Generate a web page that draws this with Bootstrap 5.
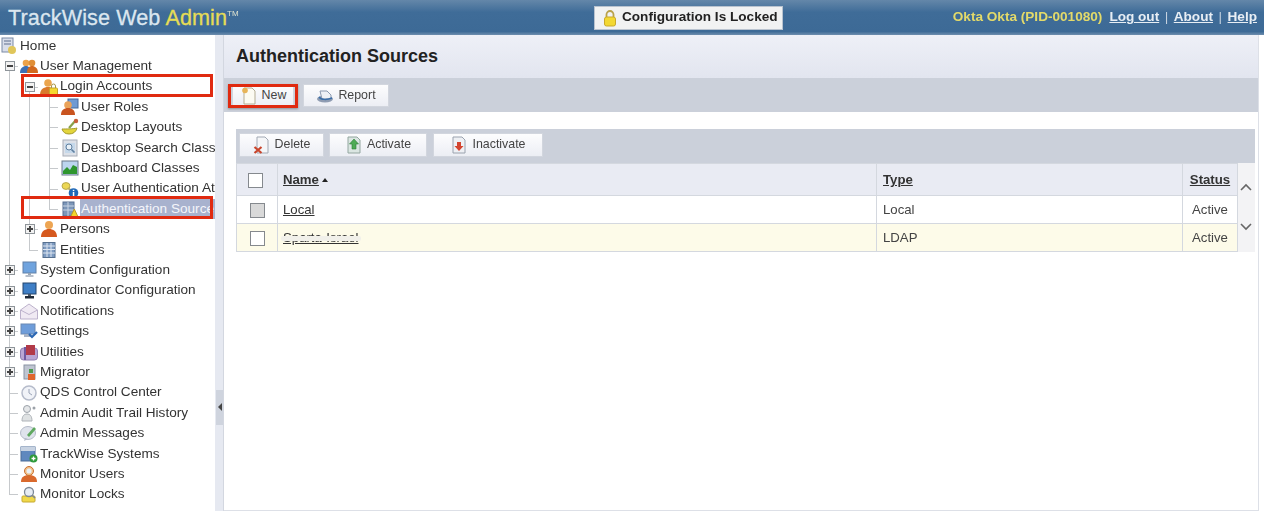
<!DOCTYPE html>
<html lang="en"><head><meta charset="utf-8"><title>TrackWise Web Admin</title>
<link href="https://cdn.jsdelivr.net/npm/bootstrap@5.3.0/dist/css/bootstrap.min.css" rel="stylesheet">
<style>
html,body{height:511px;overflow:hidden}
body{font-family:"Liberation Sans",Arial,sans-serif;background:#fff;color:#333}
.shell{width:1264px;height:511px;filter:blur(.5px);position:relative;overflow:hidden}
.topbar{height:35px;background:linear-gradient(#6487a9,#3f6c98 35%,#3d6a96 90%,#6e8eae);padding:0 7px 0 8px}
.brand{font-size:21.6px;line-height:35px;color:#dbe6ef;letter-spacing:.1px;white-space:nowrap;width:586px;-webkit-text-stroke:.3px #dbe6ef}
.brand b{font-weight:400;color:#e6dc55;-webkit-text-stroke:.3px #e6dc55;margin-left:0}
.brand sup{font-size:8px;color:#dfe3d0;top:-9px;-webkit-text-stroke:0}
.lockbox{width:189px;height:24px;background:#f1f2f2;border:1px solid #b9c3cf;font-size:13.6px;font-weight:700;color:#222;gap:3px;padding-left:6px}
.usr{font-size:13.6px;font-weight:700;color:#e3da6a;white-space:nowrap}
.usr a{color:#e8eef4;margin-left:7px}
.usr i{font-style:normal;color:#c5d2df;font-weight:400;margin-left:5.5px}
.usr i + a{margin-left:5.5px}
.bodyrow{height:476px}
.side{width:215px;overflow:hidden;flex:none;font-size:13.6px;color:#333;padding-top:.7px}
.trow{height:20.4px;white-space:nowrap}
.tg,.tc{width:20px;height:100%;flex:none;position:relative}
.tg.on::before,.tc::before{content:"";position:absolute;left:9px;top:0;bottom:0;border-left:1px solid #c6c9cc}
.tc.end::before{bottom:50%}
.tc.top::before{top:50%}
.tc::after{content:"";position:absolute;left:9px;right:2px;top:50%;border-top:1px solid #c6c9cc}
.tx{position:absolute;z-index:1;left:5px;top:50%;margin-top:-5px;width:10px;height:10px;background:#f2f2f2;border:1px solid #8e9499}
.tx::before{content:"";position:absolute;left:1px;right:1px;top:3px;border-top:2px solid #444}
.tx.plus::after{content:"";position:absolute;top:1px;bottom:1px;left:3px;border-left:2px solid #444}
.ic{width:18px;height:18px;flex:none;margin-right:2px}
.lv2 .ic{margin-left:1px}
.sel{background:#a8b2ce;color:#f4f5fa;flex:1;margin-left:-1px;padding-left:1px;line-height:20.4px}
.split{width:9px;flex:none;background:#e6e9f1;position:relative;border-right:1px solid #d3d7e0}
.grip{position:absolute;left:1px;right:0;top:355px;height:35px;background:#cfd4de}
.grip::after{content:"";position:absolute;left:2px;top:13px;border:4px solid transparent;border-right:4px solid #444;border-left:0}
.mainp{flex:1;min-width:0;position:relative;border-right:1px solid #dde0e7;margin-right:5px;border-bottom:1px solid #dde0e7}
.ttl{height:43px;background:linear-gradient(#eef0f7,#e2e5ef);padding-left:12px;font-size:18px;font-weight:700;color:#222}
.tbar1{height:34px;background:#cbd0da;padding:6px 0 0 8px;gap:9px}
.tbtn{height:23px;background:linear-gradient(#fdfdfe,#eceef4);border:1px solid #d2d6de;border-radius:0;font-size:12.4px;color:#444;padding:0;gap:4px;display:flex;align-items:center;justify-content:center}
.tbar2 .tbtn span{margin-top:-1px}
.w-new{width:62px}.w-rep{width:86px}.w-del{width:85px;height:24px}.w-act{width:98px;height:24px}.w-ina{width:110px;height:24px}
.gridw{margin:17px 0 0 12px;width:1019px}
.tbar2{height:34px;background:#cbd0da;padding:4px 0 0 3px;gap:5px}
.w-act{margin-right:1px}
.gridt{width:1001px;flex:none}
.gridt.table{margin:0;table-layout:fixed;--bs-table-bg:transparent;border-color:#d4d8df;font-size:13.2px;color:#444}
.gridt th,.gridt td{border:1px solid #d4d8df;padding:0 5px;vertical-align:middle;line-height:1}
.gridt thead tr{height:32px;background:#e9ebf3}
.gridt th{font-weight:700;color:#333;font-size:13.2px}
.gridt a{color:#333}
.gridt th.c3,.gridt td.c3{padding-left:6px}
.r1{height:28px;background:#fff}.r2{height:28px;background:#fdfbe9}
.c1{width:41px;padding:0!important;text-align:center}.c2{width:599px}.c3{width:306px}.c4{width:55px;text-align:center}
.cbx{display:block;width:15px;height:15px;margin:1px auto 0;border:1px solid #85898e;background:#fff}
th .cbx{margin-left:11px}
.cbx.dis{background:#d9d9d9}
.sortm{display:inline-block;border:3.5px solid transparent;border-bottom:4px solid #222;border-top:0;margin:0 0 2px 3px}
.mask{position:absolute;left:3px;top:12px;width:80px;height:5px;background:#f1f0ea;border-radius:2px}
.cellrel{position:relative}
.scr{width:18px;background:#f3f3f5;gap:20px}
.scr svg{display:block}
.redb{position:absolute;border:3px solid #e02a10;z-index:5;pointer-events:none}
.rb1{left:21px;top:74px;width:192px;height:23px}
.rb2{left:21px;top:196px;width:192px;height:23px}
.rb3{left:228px;top:84px;width:70px;height:24px;box-shadow:0 1px 2px rgba(0,0,0,.3)}
</style></head><body>
<svg width="0" height="0" class="d-block position-absolute">
<defs>
<symbol id="s-lock" viewBox="0 0 18 18"><path d="M5.500 9V5.500a3.500 3.500 0 0 1 7 0V9" fill="none" stroke="#b9a24a" stroke-width="1.800"/><rect x="3.500" y="8" width="11" height="9" rx="2" fill="#f3d832" stroke="#c9a92a"/></symbol>
<symbol id="s-home" viewBox="0 0 18 18"><rect x="2" y="1" width="11" height="14" fill="#d9deea" stroke="#7a8aa5"/><path d="M4 4h7M4 7h7" stroke="#5f6f8d"/><circle cx="12" cy="13" r="4" fill="#e0c65a"/></symbol>
<symbol id="s-users" viewBox="0 0 18 18"><circle cx="6" cy="6" r="3.300" fill="#eda24a"/><circle cx="12" cy="6" r="3.300" fill="#e08e36"/><path d="M0 16c0-5 3-7 6-7s5 2 5 7z" fill="#3d6fb4"/><path d="M7 16c0-5 2-7 5-7s6 2 6 7z" fill="#d2691e"/></symbol>
<symbol id="s-login" viewBox="0 0 18 18"><circle cx="8" cy="5" r="3.800" fill="#eba54e"/><path d="M0 17c0-6 4-8 8-8s6 2 6 8z" fill="#d9792b"/><rect x="9.500" y="10" width="8" height="7" rx="1" fill="#f6d92f" stroke="#c5a52a"/><path d="M11.500 10V8a2 2 0 0 1 4 0v2" fill="none" stroke="#a89447"/></symbol>
<symbol id="s-role" viewBox="0 0 18 18"><rect x="7" y="1" width="10" height="9" fill="#6f9ad3" stroke="#466a9c"/><circle cx="7" cy="7" r="3.800" fill="#eaa35a"/><path d="M0 17c0-5 3-7 7-7s7 2 7 7z" fill="#c9541f"/></symbol>
<symbol id="s-layout" viewBox="0 0 18 18"><path d="M1 11c3 0 12 0 15-1-1 4-4 6-8 6s-6-2-7-5z" fill="#e3d53c" stroke="#a59a2e"/><path d="M8 10l7-8" stroke="#8aa14a" stroke-width="2.200"/><circle cx="15" cy="3" r="2.200" fill="#c9603a"/></symbol>
<symbol id="s-search" viewBox="0 0 18 18"><rect x="2" y="1" width="14" height="16" fill="#dde1e8" stroke="#a9aeb8"/><rect x="4" y="4" width="10" height="10" fill="#c5d8ea"/><circle cx="8" cy="8" r="3" fill="#e8f0f7" stroke="#5f7f9f"/><path d="M10.500 10.500l3 3" stroke="#5f7f9f" stroke-width="1.600"/></symbol>
<symbol id="s-dash" viewBox="0 0 18 18"><rect x="1" y="2" width="16" height="14" fill="#bcd5ef" stroke="#6d7a8a"/><path d="M2 12l4-4 3 3 3-5 4 2v7H2z" fill="#2e962e"/></symbol>
<symbol id="s-uauth" viewBox="0 0 18 18"><ellipse cx="5" cy="6" rx="4" ry="3.400" fill="#ecd754" stroke="#b8a84a"/><path d="M7 8l5 4" stroke="#bcae62" stroke-width="2"/><circle cx="12.500" cy="13" r="4.800" fill="#1f68b8"/><rect x="11.800" y="12" width="1.500" height="4" fill="#fff"/><rect x="11.800" y="9.800" width="1.500" height="1.300" fill="#fff"/></symbol>
<symbol id="s-asrc" viewBox="0 0 18 18"><rect x="2" y="2" width="11" height="14" fill="#7d97b9" stroke="#566f91"/><path d="M2 6h11M2 10h11M7 2v14" stroke="#cbd5e4"/><path d="M9.500 17l3.800-8 3.800 8z" fill="#f4d62a" stroke="#b89c26"/></symbol>
<symbol id="s-person" viewBox="0 0 18 18"><circle cx="9" cy="5" r="4" fill="#eda553"/><path d="M1 17c0-6 4-8 8-8s8 2 8 8z" fill="#d6591e"/></symbol>
<symbol id="s-ent" viewBox="0 0 18 18"><rect x="3" y="1.500" width="12" height="15" fill="#7f9cc2" stroke="#56708f"/><path d="M3 5h12M3 8.500h12M3 12h12M7 2v14M11 2v14" stroke="#dde5f0"/></symbol>
<symbol id="s-mon" viewBox="0 0 18 18"><rect x="3" y="1" width="13" height="11" fill="#6fa3de" stroke="#6080a8"/><rect x="8" y="12" width="3" height="2" fill="#9aa6b5"/><rect x="5.500" y="14" width="8" height="2" fill="#b7bfca"/></symbol>
<symbol id="s-mon2" viewBox="0 0 18 18"><rect x="3" y="1" width="13" height="11" fill="#3f7fc6" stroke="#24476f"/><rect x="8" y="12" width="3" height="2" fill="#4b5563"/><rect x="5" y="14" width="9" height="2.500" fill="#1f2937"/></symbol>
<symbol id="s-mail" viewBox="0 0 18 18"><path d="M.5 8L9 2l8.500 6v9H.5z" fill="#f0eaf3" stroke="#bdb2cc"/><path d="M.5 8L9 12.500 17.500 8" fill="none" stroke="#bdb2cc"/></symbol>
<symbol id="s-set" viewBox="0 0 18 18"><rect x="1" y="2" width="14" height="10" fill="#6e9dda" stroke="#6a89b4"/><rect x="4" y="12" width="7" height="3" fill="#a7b3c6"/><path d="M9 12l3 3 5-5" fill="none" stroke="#2b67b3" stroke-width="2.200"/></symbol>
<symbol id="s-util" viewBox="0 0 18 18"><rect x="0.500" y="5" width="17" height="12" rx="3" fill="#b9a5d4" stroke="#8f7eb0"/><rect x="6" y="2" width="9" height="10" fill="#b23a48"/><rect x="4" y="4" width="2" height="13" fill="#7058a0"/></symbol>
<symbol id="s-mig" viewBox="0 0 18 18"><rect x="4" y="2" width="11" height="14" fill="#bfc5d1" stroke="#8a93a3"/><rect x="9" y="6" width="4" height="4" fill="#4f9a4f"/><path d="M8 11h7v6H8z" fill="#e0662e"/></symbol>
<symbol id="s-clock" viewBox="0 0 18 18"><circle cx="9" cy="9" r="7" fill="#f1f3f8" stroke="#b6bccb" stroke-width="1.500"/><path d="M9 5v4l3 2" stroke="#9aa3b6" fill="none"/></symbol>
<symbol id="s-audit" viewBox="0 0 18 18"><circle cx="7" cy="5" r="3.500" fill="#e5e7e9" stroke="#9ba1a8"/><path d="M2 17c0-5 2-7 5-7s5 2 5 7z" fill="#dfe2e3" stroke="#aeb3b8"/><circle cx="14" cy="4" r="1.500" fill="#9ba1a8"/></symbol>
<symbol id="s-msg" viewBox="0 0 18 18"><ellipse cx="8" cy="9" rx="7.500" ry="6.500" fill="#dfe3ec" stroke="#b4bac8"/><path d="M7 11l7-8 2 2-7 8z" fill="#5fa85f"/><path d="M5 14l-1 3 4-2z" fill="#b4bac8"/></symbol>
<symbol id="s-sys" viewBox="0 0 18 18"><rect x="1" y="2" width="14" height="14" fill="#5f88be" stroke="#4d6d97"/><rect x="1" y="2" width="14" height="4" fill="#c8d3e2"/><circle cx="13.500" cy="13.500" r="4" fill="#2f9a3a"/><path d="M11.500 13.500h4M13.500 11.500v4" stroke="#fff" stroke-width="1.300"/></symbol>
<symbol id="s-mu" viewBox="0 0 18 18"><path d="M1 17c0-5 3-7 8-7s8 2 8 7z" fill="#d9692d"/><circle cx="9" cy="6" r="4.500" fill="#f2c48d" stroke="#c96f30"/><circle cx="9" cy="6" r="2.500" fill="#e8f0f8"/></symbol>
<symbol id="s-ml" viewBox="0 0 18 18"><rect x="2" y="11" width="13" height="6" rx="1" fill="#f0d84a" stroke="#c6aa30"/><circle cx="9" cy="7" r="4.500" fill="#e7edf4" stroke="#7d8896" stroke-width="1.300"/><path d="M12 10l3 3" stroke="#7d8896" stroke-width="1.500"/></symbol>
<symbol id="s-new" viewBox="0 0 18 18"><path d="M4 1h8l3 3v13H4z" fill="#fcfbf2" stroke="#b5ad94"/><circle cx="5" cy="3.500" r="2.800" fill="#e7b458"/></symbol>
<symbol id="s-rep" viewBox="0 0 18 18"><ellipse cx="9" cy="12" rx="8" ry="3.500" fill="#8f9cb2"/><path d="M4 4h7l4 4v4H6z" fill="#eef1f6" stroke="#8c9ab0"/><path d="M3 10c2 3 8 3 13 1" stroke="#3b6ea8" stroke-width="1.500" fill="none"/></symbol>
<symbol id="s-del" viewBox="0 0 18 18"><path d="M4 1h8l3 3v13H4z" fill="#f5f6f8" stroke="#a2a9b4"/><path d="M1.500 11l7 6M8.500 11l-7 6" stroke="#c9452c" stroke-width="2.200"/></symbol>
<symbol id="s-act" viewBox="0 0 18 18"><path d="M3 1h9l3 3v13H3z" fill="#dbe6e2" stroke="#93a6a0"/><path d="M9 3l4.500 5H11v5H7V8H4.500z" fill="#4eab55" stroke="#2d7f36" stroke-width=".6"/></symbol>
<symbol id="s-ina" viewBox="0 0 18 18"><path d="M3 1h9l3 3v13H3z" fill="#eef0f4" stroke="#9aa2ae"/><path d="M9 15l-4.500-5H7V6h4v4h2.500z" fill="#d3442f"/></symbol>
</defs></svg>

<div class="shell">
<header class="topbar d-flex align-items-center">
  <div class="brand">TrackWise Web <b>Admin</b><sup>TM</sup></div>
  <div class="lockbox d-flex align-items-center"><svg width="18" height="18"><use href="#s-lock"/></svg><span>Configuration Is Locked</span></div>
  <div class="usr ms-auto d-flex align-items-center">Okta Okta (PID-001080)<a href="#">Log out</a><i>|</i><a href="#">About</a><i>|</i><a href="#">Help</a></div>
</header>
<div class="bodyrow d-flex">
<nav class="side">
  <div class="trow d-flex align-items-center"><svg class="ic"><use href="#s-home"/></svg>Home</div>
  <div class="trow d-flex align-items-center"><span class="tc top"><span class="tx"></span></span><svg class="ic"><use href="#s-users"/></svg>User Management</div>
  <div class="trow d-flex align-items-center"><span class="tg on"></span><span class="tc top"><span class="tx"></span></span><svg class="ic"><use href="#s-login"/></svg>Login Accounts</div>
  <div class="trow d-flex align-items-center lv2"><span class="tg on"></span><span class="tg on"></span><span class="tc"></span><svg class="ic"><use href="#s-role"/></svg>User Roles</div>
  <div class="trow d-flex align-items-center lv2"><span class="tg on"></span><span class="tg on"></span><span class="tc"></span><svg class="ic"><use href="#s-layout"/></svg>Desktop Layouts</div>
  <div class="trow d-flex align-items-center lv2"><span class="tg on"></span><span class="tg on"></span><span class="tc"></span><svg class="ic"><use href="#s-search"/></svg>Desktop Search Class</div>
  <div class="trow d-flex align-items-center lv2"><span class="tg on"></span><span class="tg on"></span><span class="tc"></span><svg class="ic"><use href="#s-dash"/></svg>Dashboard Classes</div>
  <div class="trow d-flex align-items-center lv2"><span class="tg on"></span><span class="tg on"></span><span class="tc"></span><svg class="ic"><use href="#s-uauth"/></svg>User Authentication At</div>
  <div class="trow d-flex align-items-center lv2"><span class="tg on"></span><span class="tg on"></span><span class="tc end"></span><svg class="ic"><use href="#s-asrc"/></svg><span class="sel">Authentication Source</span></div>
  <div class="trow d-flex align-items-center"><span class="tg on"></span><span class="tc"><span class="tx plus"></span></span><svg class="ic"><use href="#s-person"/></svg>Persons</div>
  <div class="trow d-flex align-items-center"><span class="tg on"></span><span class="tc end"></span><svg class="ic"><use href="#s-ent"/></svg>Entities</div>
  <div class="trow d-flex align-items-center"><span class="tc"><span class="tx plus"></span></span><svg class="ic"><use href="#s-mon"/></svg>System Configuration</div>
  <div class="trow d-flex align-items-center"><span class="tc"><span class="tx plus"></span></span><svg class="ic"><use href="#s-mon2"/></svg>Coordinator Configuration</div>
  <div class="trow d-flex align-items-center"><span class="tc"><span class="tx plus"></span></span><svg class="ic"><use href="#s-mail"/></svg>Notifications</div>
  <div class="trow d-flex align-items-center"><span class="tc"><span class="tx plus"></span></span><svg class="ic"><use href="#s-set"/></svg>Settings</div>
  <div class="trow d-flex align-items-center"><span class="tc"><span class="tx plus"></span></span><svg class="ic"><use href="#s-util"/></svg>Utilities</div>
  <div class="trow d-flex align-items-center"><span class="tc"><span class="tx plus"></span></span><svg class="ic"><use href="#s-mig"/></svg>Migrator</div>
  <div class="trow d-flex align-items-center"><span class="tc"></span><svg class="ic"><use href="#s-clock"/></svg>QDS Control Center</div>
  <div class="trow d-flex align-items-center"><span class="tc"></span><svg class="ic"><use href="#s-audit"/></svg>Admin Audit Trail History</div>
  <div class="trow d-flex align-items-center"><span class="tc"></span><svg class="ic"><use href="#s-msg"/></svg>Admin Messages</div>
  <div class="trow d-flex align-items-center"><span class="tc"></span><svg class="ic"><use href="#s-sys"/></svg>TrackWise Systems</div>
  <div class="trow d-flex align-items-center"><span class="tc"></span><svg class="ic"><use href="#s-mu"/></svg>Monitor Users</div>
  <div class="trow d-flex align-items-center"><span class="tc end"></span><svg class="ic"><use href="#s-ml"/></svg>Monitor Locks</div>
</nav>
<div class="split"><div class="grip"></div></div>
<main class="mainp">
  <div class="ttl d-flex align-items-center">Authentication Sources</div>
  <div class="tbar1 d-flex">
    <button class="tbtn w-new" type="button"><svg width="18" height="18"><use href="#s-new"/></svg><span>New</span></button>
    <button class="tbtn w-rep" type="button"><svg width="18" height="18"><use href="#s-rep"/></svg><span>Report</span></button>
  </div>
  <div class="gridw">
    <div class="tbar2 d-flex">
      <button class="tbtn w-del" type="button"><svg width="18" height="18"><use href="#s-del"/></svg><span>Delete</span></button>
      <button class="tbtn w-act" type="button"><svg width="18" height="18"><use href="#s-act"/></svg><span>Activate</span></button>
      <button class="tbtn w-ina" type="button"><svg width="18" height="18"><use href="#s-ina"/></svg><span>Inactivate</span></button>
    </div>
    <div class="d-flex">
      <table class="table gridt">
        <thead><tr><th class="c1"><span class="cbx"></span></th><th class="c2"><a href="#">Name</a><span class="sortm"></span></th><th class="c3"><a href="#">Type</a></th><th class="c4"><a href="#">Status</a></th></tr></thead>
        <tbody>
          <tr class="r1"><td class="c1"><span class="cbx dis"></span></td><td><a href="#">Local</a></td><td class="c3">Local</td><td class="c4">Active</td></tr>
          <tr class="r2"><td class="c1"><span class="cbx"></span></td><td class="cellrel"><a href="#">Sparta-Israel</a><span class="mask"></span></td><td class="c3">LDAP</td><td class="c4">Active</td></tr>
        </tbody>
      </table>
      <div class="scr d-flex flex-column align-items-center">
        <svg width="14" height="39" viewBox="0 0 14 39"><path d="M1 27l5-5 5 5" fill="none" stroke="#666" stroke-width="1.600"/></svg>
        <svg width="14" height="14" viewBox="0 0 14 14"><path d="M1 2l5 5 5-5" fill="none" stroke="#666" stroke-width="1.600"/></svg>
      </div>
    </div>
  </div>
</main>
</div>
<div class="redb rb1"></div><div class="redb rb2"></div><div class="redb rb3"></div>
</div>
</body></html>
